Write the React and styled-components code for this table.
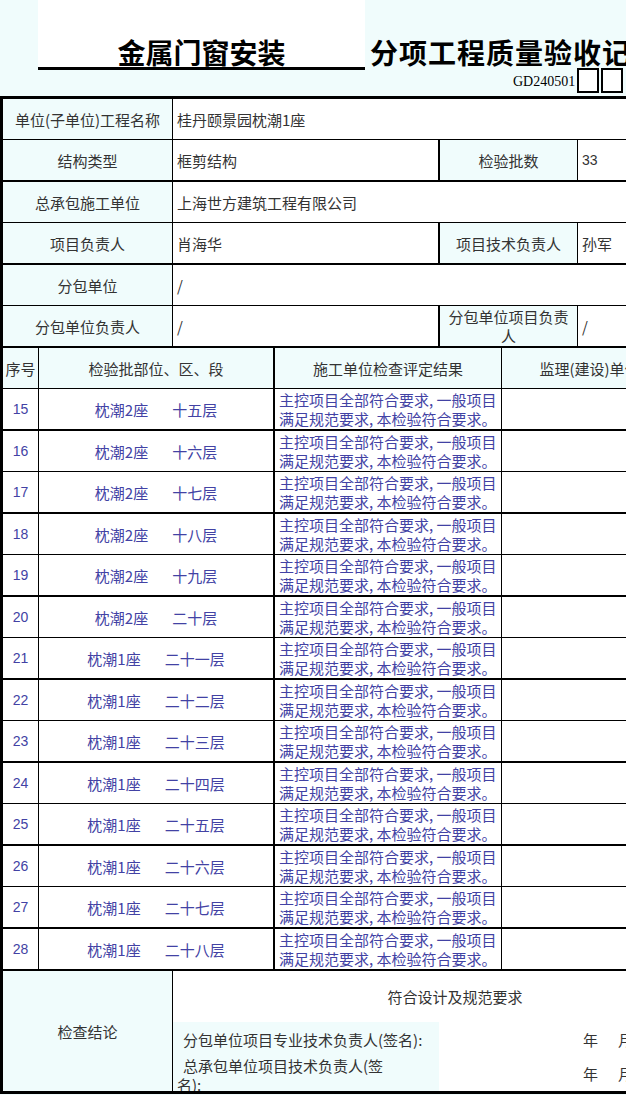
import styled, { createGlobalStyle } from 'styled-components';

const CYAN = '#f0fcfc';
const INK = '#4242a4';

const GlobalStyle = createGlobalStyle`
  html, body {
    margin: 0;
    padding: 0;
  }
  body {
    width: 626px;
    height: 1095px;
    overflow: hidden;
    background: ${CYAN};
    font-family: "Noto Sans CJK SC", "Noto Sans", sans-serif;
    color: #333;
  }
`;

const Page = styled.div`
  width: 737px;
`;

const Head = styled.header`
  height: 96px;
`;

const TitleLine = styled.div`
  display: flex;
  align-items: flex-end;
  height: 70px;
  font: 700 28px/1 "Noto Sans CJK SC", sans-serif;
  color: #000;
`;

const TitleBox = styled.div`
  margin-left: 38px;
  width: 327px;
  height: 100%;
  box-sizing: border-box;
  background: #fff;
  border-bottom: 3px solid #000;
  display: flex;
  align-items: flex-end;
  justify-content: center;
  padding-bottom: 1px;
`;

const TitleTail = styled.div`
  padding-left: 5px;
  padding-bottom: 4px;
  letter-spacing: 1px;
  white-space: nowrap;
`;

const CodeLine = styled.div`
  display: flex;
  align-items: flex-end;
  margin-top: -2px;
  padding-left: 513px;
  height: 25px;
`;

const Code = styled.span`
  font: 14px/1 "Liberation Serif", serif;
  color: #000;
  padding-bottom: 4px;
  margin-right: 2px;
`;

const CodeBox = styled.span`
  width: 22px;
  height: 25px;
  box-sizing: border-box;
  border: 2px solid #000;
  background: #fff;
  & + & {
    margin-left: 2px;
  }
`;

const Sheet = styled.div`
  width: 737px;
  box-sizing: border-box;
  border-top: 3px solid #000;
  border-left: 3px solid #000;
  border-bottom: 3px solid #000;
  background: #fff;
`;

const Row = styled.div`
  display: grid;
  grid-template-columns: ${(p) => p.$cols};
  grid-template-rows: 100%;
  box-sizing: content-box;
  height: ${(p) => p.$h || 40}px;
  overflow: hidden;
  border-top: ${(p) => p.$edge || 0}px solid #000;
`;

const Cell = styled.div`
  display: flex;
  align-items: center;
  justify-content: ${(p) => (p.$left ? 'flex-start' : 'center')};
  text-align: center;
  box-sizing: border-box;
  border-left: ${(p) => p.$edge || 0}px solid #000;
  background: ${(p) => (p.$label ? CYAN : '#fff')};
  padding: 0 ${(p) => (p.$wrap ? 7 : p.$tight ? 0 : 4)}px;
  overflow: hidden;
  white-space: ${(p) => (p.$wrap ? 'normal' : 'nowrap')};
  font-size: 15px;
  line-height: 19px;
  color: ${(p) => (p.$ink ? INK : '#333')};
`;

const Num = styled.span`
  font: 14px/19px "Liberation Sans", Arial, sans-serif;
`;

const Place = styled.div`
  display: flex;
  gap: 24px;
`;

const Lines = styled.div`
  display: flex;
  flex-direction: column;
  text-align: left;
`;

const Body = styled.div`
  display: flex;
  flex-direction: column;
  overflow: hidden;
  border-left: 1px solid #000;
  background: #fff;
  font-size: 15px;
  line-height: 19px;
`;

const Verdict = styled.div`
  height: 51px;
  flex: none;
  display: flex;
  align-items: center;
  justify-content: center;
`;

const SignRow = styled.div`
  display: grid;
  grid-template-columns: 266px 144px 35px 1fr;
  flex: none;
  height: ${(p) => p.$h}px;
`;

const SignName = styled.div`
  background: ${CYAN};
  display: flex;
  align-items: ${(p) => (p.$wrap ? 'flex-start' : 'center')};
  padding-left: ${(p) => (p.$wrap ? 4 : 10)}px;
  white-space: nowrap;
  overflow: hidden;
  & > span {
    display: block;
    width: ${(p) => (p.$wrap ? '212px' : 'auto')};
    white-space: ${(p) => (p.$wrap ? 'normal' : 'nowrap')};
    text-indent: ${(p) => (p.$wrap ? 6 : 0)}px;
  }
`;

const Mark = styled.div`
  display: flex;
  align-items: center;
`;

const INFO = '169px 266px 139px 1fr';
const GRID = '35px 235px 228px 1fr';

const floors = [
  [15, '枕潮2座', '十五层'],
  [16, '枕潮2座', '十六层'],
  [17, '枕潮2座', '十七层'],
  [18, '枕潮2座', '十八层'],
  [19, '枕潮2座', '十九层'],
  [20, '枕潮2座', '二十层'],
  [21, '枕潮1座', '二十一层'],
  [22, '枕潮1座', '二十二层'],
  [23, '枕潮1座', '二十三层'],
  [24, '枕潮1座', '二十四层'],
  [25, '枕潮1座', '二十五层'],
  [26, '枕潮1座', '二十六层'],
  [27, '枕潮1座', '二十七层'],
  [28, '枕潮1座', '二十八层'],
];

export default function App() {
  return (
    <>
      <GlobalStyle />
      <Page>
        <Head>
          <TitleLine>
            <TitleBox>金属门窗安装</TitleBox>
            <TitleTail>分项工程质量验收记录</TitleTail>
          </TitleLine>
          <CodeLine>
            <Code>GD240501</Code>
            <CodeBox />
            <CodeBox />
          </CodeLine>
        </Head>
        <Sheet>
          <Row $cols="169px 1fr">
            <Cell $label>单位(子单位)工程名称</Cell>
            <Cell $edge={1} $left>桂丹颐景园枕潮1座</Cell>
          </Row>
          <Row $cols={INFO} $edge={1}>
            <Cell $label>结构类型</Cell>
            <Cell $edge={1} $left>框剪结构</Cell>
            <Cell $edge={2} $label>检验批数</Cell>
            <Cell $edge={1} $left><Num>33</Num></Cell>
          </Row>
          <Row $cols="169px 1fr" $edge={2}>
            <Cell $label>总承包施工单位</Cell>
            <Cell $edge={1} $left>上海世方建筑工程有限公司</Cell>
          </Row>
          <Row $cols={INFO} $edge={1}>
            <Cell $label>项目负责人</Cell>
            <Cell $edge={1} $left>肖海华</Cell>
            <Cell $edge={2} $label>项目技术负责人</Cell>
            <Cell $edge={1} $left>孙军</Cell>
          </Row>
          <Row $cols="169px 1fr" $edge={2}>
            <Cell $label>分包单位</Cell>
            <Cell $edge={1} $left>/</Cell>
          </Row>
          <Row $cols={INFO} $edge={1}>
            <Cell $label>分包单位负责人</Cell>
            <Cell $edge={1} $left>/</Cell>
            <Cell $edge={2} $label $wrap>分包单位项目负责人</Cell>
            <Cell $edge={1} $left>/</Cell>
          </Row>
          <Row $cols={GRID} $edge={2}>
            <Cell $label $tight>序号</Cell>
            <Cell $edge={1} $label>检验批部位、区、段</Cell>
            <Cell $edge={2} $label>施工单位检查评定结果</Cell>
            <Cell $edge={1} $label>监理(建设)单位验收结论</Cell>
          </Row>
          {floors.map(([no, block, level], i) => (
            <Row key={no} $cols={GRID} $edge={i % 2 === 0 ? 1 : 2}>
              <Cell $ink><Num>{no}</Num></Cell>
              <Cell $edge={1} $ink>
                <Place>
                  <span>{block}</span>
                  <span>{level}</span>
                </Place>
              </Cell>
              <Cell $edge={2} $ink $left>
                <Lines>
                  <span>主控项目全部符合要求, 一般项目</span>
                  <span>满足规范要求, 本检验符合要求。</span>
                </Lines>
              </Cell>
              <Cell $edge={1} />
            </Row>
          ))}
          <Row $cols="169px 1fr" $edge={2} $h={120}>
            <Cell $label>检查结论</Cell>
            <Body>
              <Verdict>符合设计及规范要求</Verdict>
              <SignRow $h={34}>
                <SignName>
                  <span>分包单位项目专业技术负责人(签名):</span>
                </SignName>
                <span />
                <Mark>年</Mark>
                <Mark>月</Mark>
              </SignRow>
              <SignRow $h={35}>
                <SignName $wrap>
                  <span>总承包单位项目技术负责人(签名):</span>
                </SignName>
                <span />
                <Mark>年</Mark>
                <Mark>月</Mark>
              </SignRow>
            </Body>
          </Row>
        </Sheet>
      </Page>
    </>
  );
}
